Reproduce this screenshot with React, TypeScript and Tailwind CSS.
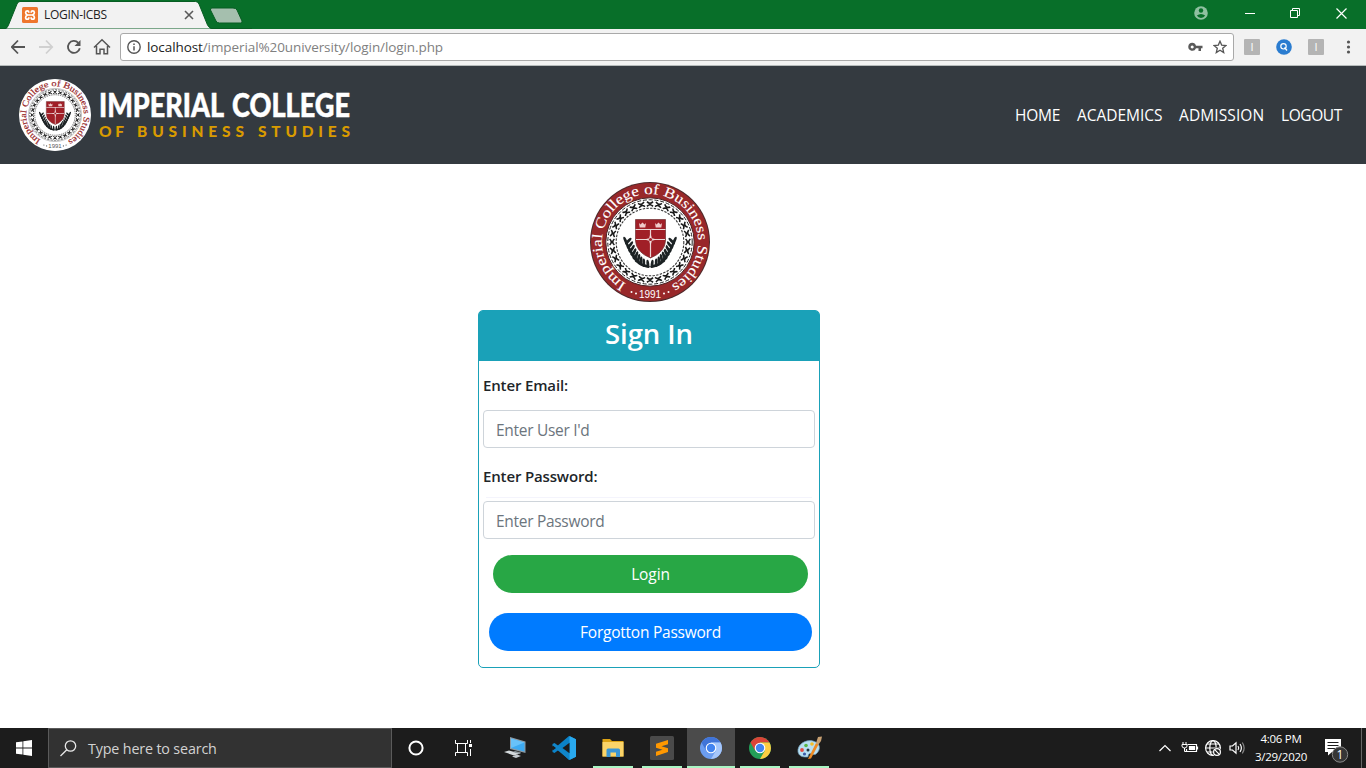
import React from "react";

const ring = (n: number) => Array.from({ length: n }, (_, i) => (i * 360) / n);

function Seal({ id, solid, className }: { id: string; solid: boolean; className: string }) {
  const red = "#98282a";
  return (
    <svg viewBox="0 0 120 120" className={className}>
      <circle cx="60" cy="60" r="60" fill={solid ? "#4d2a2b" : "#fff"} />
      <circle cx="60" cy="60" r="59" fill={solid ? red : "#fff"} />
      <circle cx="60" cy="60" r="44.2" fill="#fff" stroke={solid ? "#4b2224" : "#555"} strokeWidth={solid ? 1 : 0.6} />
      <defs>
        <path id={id} d="M36.2 101.7 A48 48 0 1 1 80.300 103.500" />
      </defs>
      <text fill={solid ? "#fff" : "#98282a"} className="font-['Liberation_Serif',serif] text-[14.5px]" stroke={solid ? "#fff" : "#98282a"} strokeWidth={solid ? 0.1 : 0.3}>
        <textPath href={"#" + id} textLength="254" lengthAdjust="spacingAndGlyphs">Imperial College of Business Studies</textPath>
      </text>
      <text x="60" y="115.8" textAnchor="middle" fill={solid ? "#fff" : "#555"} className="font-['Liberation_Sans',sans-serif] text-[10px]">1991</text>
      {[[41.500, 110], [46, 111.5], [74, 111.5], [78.500, 110]].map(([x, y]) => (
        <circle key={x} cx={x} cy={y} r="1" fill={solid ? "#fff" : "#555"} />
      ))}
      <circle cx="60" cy="60" r="42.2" fill="none" stroke="#222" strokeWidth="1" strokeDasharray="4 1.8" />
      {ring(28).map((a) => (
        <g key={a} transform={`rotate(${a} 60 60) translate(60 22)`} stroke="#1b1b1b" strokeWidth="1.6" fill="none">
          <path d="M-3-2.4Q0 1 3-2.4M-3 2.4Q0-1 3 2.4M-1 0H1" />
        </g>
      ))}
      <circle cx="60" cy="60" r="33.8" fill="none" stroke="#333" strokeWidth="1.1" strokeDasharray="2.4 1.3" />
      <g fill="#1c2224">
        {[0, 1, 2, 3, 4, 5, 6, 7, 8].map((i) => {
          const t = i / 8;
          const x = 57 - 20 * Math.pow(t, 0.75);
          const y = 83 - 24 * Math.pow(t, 1.4);
          const tilt = -62 + 50 * t;
          return (
            <g key={i}>
              <ellipse cx={x - 1.2} cy={y - 1} rx="1.4" ry="4.2" transform={`rotate(${tilt - 12} ${x} ${y})`} />
              <ellipse cx={x + 1} cy={y - 1} rx="1.4" ry="4.2" transform={`rotate(${tilt + 55} ${x} ${y})`} />
              <ellipse cx={121.2 - x} cy={y - 1} rx="1.4" ry="4.2" transform={`rotate(${12 - tilt} ${120 - x} ${y})`} />
              <ellipse cx={119 - x} cy={y - 1} rx="1.4" ry="4.2" transform={`rotate(${-55 - tilt} ${120 - x} ${y})`} />
            </g>
          );
        })}
      </g>
      <path d="M45.5 37.500H75.5V59Q75 70 60.5 76Q46 70 45.5 59Z" fill="#a01f27" stroke="#fff" strokeWidth="3" />
      <path d="M45.5 37.500H75.5V59Q75 70 60.5 76Q46 70 45.5 59Z" fill="#a01f27" stroke="#6b3033" strokeWidth=".7" />
      <path d="M45.5 47.500H75.5M60.5 47V75M46 57.500H75" stroke="#ead6d6" strokeWidth="1.2" />
      <path d="M49 41l1.5 1.5 2-2 2 2 1.5-1.5-.7 4.5h-5.6zM65 41l1.5 1.5 2-2 2 2 1.5-1.5-.7 4.5h-5.6z" fill="#efcaca" />
      <path d="M60.5 51l1.3 5.200 5.200 1.300-5.200 1.300-1.300 5.200-1.300-5.200-5.200-1.300 5.200-1.300z" fill="#f1dede" />
      <circle cx="60.5" cy="57.500" r="1.6" fill="#a01f27" />
    </svg>
  );
}

function TitleBar() {
  return (
    <div className="relative flex h-[29px] w-full bg-[#086f29]">
      <div className="relative flex h-[29px] w-[252px] items-center">
        <svg className="absolute left-0 top-0" width="252" height="29" viewBox="0 0 252 29">
          <path d="M0 28.5H252" stroke="#075d22" />
          <path d="M5 29Q7.500 28 8.500 25L17 4Q18 1.500 20 1.500H195.500Q198 1.500 199 4L207.500 25Q209 28 212 29Z" fill="#f2f2f2" stroke="#075d22" />
          <path d="M212 8H233Q236 8 237 10L242 21Q242.500 23 240.500 23H219.500Q217 23 216 21L210.500 10Q210 8 212 8Z" fill="#a5bfae" stroke="#075d22" />
        </svg>
        <svg className="relative ml-[22px] mt-px" width="16" height="16" viewBox="0 0 16 16">
          <rect width="16" height="16" rx="1.500" fill="#ee762c" />
          <path d="M6.800 5.800V5.200Q6.800 3.800 5.300 3.800T3.600 5.500Q3.600 7.200 5.500 8Q3.600 8.800 3.600 10.500Q3.600 12.200 5.300 12.200T6.800 10.800V10.200M9.200 5.800V5.200Q9.200 3.800 10.700 3.800T12.400 5.500Q12.400 7.200 10.500 8Q12.400 8.800 12.400 10.500Q12.400 12.200 10.700 12.200T9.200 10.800V10.200M5.500 8H10.500" fill="none" stroke="#fff" strokeWidth="1.700" />
        </svg>
        <span className="relative ml-[6px] w-[138px] text-[12px] tracking-[-0.3px] text-[#222]">LOGIN-ICBS</span>
        <svg className="relative ml-[2px] mt-px" width="10" height="10" viewBox="0 0 10 10"><path d="M1 1 9 9M9 1 1 9" stroke="#5a5a5a" strokeWidth="1.600" /></svg>
      </div>
      <div className="ml-auto flex h-[26px] items-center pr-[19px]">
        <svg width="14" height="14" viewBox="0 0 14 14">
          <circle cx="7" cy="7" r="6.800" fill="#8fc0a0" />
          <circle cx="7" cy="4.500" r="2.200" fill="#086f29" />
          <path d="M2.800 9.600Q7 6.400 11.200 9.600Q9.800 11.900 7 11.900T2.800 9.600Z" fill="#086f29" />
        </svg>
        <svg className="ml-[37px]" width="10" height="12"><path d="M0 6.500H10" stroke="#fff" /></svg>
        <svg className="ml-[35px]" width="10" height="10"><path d="M.5 2.500H7.500V9.500H.5ZM2.500 2.500V.5H9.500V7.500H7.500" fill="none" stroke="#fff" /></svg>
        <svg className="ml-[36px]" width="11" height="11"><path d="M.5.500 10.500 10.500M10.500.500.500 10.500" stroke="#fff" strokeWidth="1.200" /></svg>
      </div>
    </div>
  );
}

function Toolbar() {
  return (
    <div className="flex h-[37px] items-center border-b border-[#b6bbbb] bg-[#f2f2f2] pl-[11px] pr-[14px]">
      <svg width="104" height="18" viewBox="0 0 104 18" fill="none" stroke="#555" strokeWidth="1.800">
        <path d="M14 9H1.500M7 2.500.8 9 7 15.500" />
        <path d="M28 9H40.500M35 2.500 41.200 9 35 15.500" stroke="#d0d0d0" />
        <path d="M67.300 4.800A6 6 0 1 0 68.800 10.300" />
        <path d="M69.500 2V8H63.500Z" fill="#555" stroke="none" />
        <path d="M83 9.500 91 1.800 99 9.500M85.500 8V15.700H89V11.200H93V15.700H96.500V8" strokeWidth="1.500" />
      </svg>
      <div className="ml-[5px] flex h-[28px] w-[1114px] items-center rounded-[3px] border border-[#a9a9a9] bg-white pl-[6px] pr-[6px]">
        <svg width="14" height="14" viewBox="0 0 14 14" fill="none" stroke="#555">
          <circle cx="7" cy="7" r="6.200" strokeWidth="1.400" />
          <path d="M7 6.200V10.500M7 3.500V5" strokeWidth="1.500" />
        </svg>
        <span className="ml-[6px] mt-px text-[13.500px] tracking-[-0.09px] text-[#808080]"><span className="text-[#222]">localhost</span>/imperial%20university/login/login.php</span>
        <svg className="ml-auto" width="15" height="10" viewBox="0 0 15 10">
          <path d="M4.200.800A4 4 0 1 0 8 6.300H10.500V9H13V6.300H14.500V3.700H8A4 4 0 0 0 4.200.800ZM4.200 3.500A1.500 1.500 0 1 1 4.190 3.500Z" fill="#5a5a5a" fillRule="evenodd" />
        </svg>
        <svg className="ml-[10px]" width="14" height="14" viewBox="0 0 14 14"><path d="M7 1.200 8.700 5.100 13 5.500 9.700 8.200 10.700 12.500 7 10.200 3.300 12.500 4.300 8.200 1 5.500 5.300 5.100Z" fill="none" stroke="#555" strokeWidth="1.300" /></svg>
      </div>
      <span className="ml-[10px] flex h-4 w-4 items-center justify-center rounded-[1px] bg-[#b4b4b4] text-[11px] text-white">I</span>
      <svg className="ml-4" width="16" height="16" viewBox="0 0 16 16"><circle cx="8" cy="8" r="7.800" fill="#2a7cd0" /><circle cx="7.500" cy="7.300" r="2.700" fill="none" stroke="#fff" strokeWidth="1.200" /><path d="M8.500 8.500 11 11.500" stroke="#fff" strokeWidth="1.300" /></svg>
      <span className="ml-4 flex h-4 w-4 items-center justify-center rounded-[1px] bg-[#b4b4b4] text-[11px] text-white">I</span>
      <svg className="ml-auto" width="7" height="14" fill="#555"><circle cx="3.500" cy="2" r="1.600" /><circle cx="3.500" cy="7" r="1.600" /><circle cx="3.500" cy="12" r="1.600" /></svg>
    </div>
  );
}

function SiteHeader() {
  return (
    <header className="flex h-[98px] items-center bg-[#343a40] pl-[19px] pr-6">
      <Seal id="arc-small" solid={false} className="h-[72px] w-[72px]" />
      <svg className="ml-[8px] overflow-visible" width="256" height="60" viewBox="0 0 256 60">
        <g fill="#fff" stroke="#fff" strokeWidth=".5" className="font-['Lato',sans-serif] text-[32.500px] font-black">
          <text x="0" y="32" textLength="125" lengthAdjust="spacingAndGlyphs">IMPERIAL</text>
          <text x="133" y="32" textLength="118" lengthAdjust="spacingAndGlyphs">COLLEGE</text>
        </g>
        <g fill="#d99b00" className="font-['Lato',sans-serif] text-[15.500px] font-black">
          <text x="0" y="52" textLength="25">OF</text>
          <text x="38" y="52" textLength="107">BUSINESS</text>
          <text x="159" y="52" textLength="92">STUDIES</text>
        </g>
      </svg>
      <nav className="ml-auto mt-[2px] flex gap-4 text-[15.500px] text-white">
        <a className="w-[46px] whitespace-nowrap tracking-[-0.2px]">HOME</a>
        <a className="w-[86px] whitespace-nowrap tracking-[-0.020px]">ACADEMICS</a>
        <a className="w-[86px] whitespace-nowrap tracking-[0.1px]">ADMISSION</a>
        <a className="w-[61px] whitespace-nowrap tracking-[-0.4px]">LOGOUT</a>
      </nav>
    </header>
  );
}

function SignIn() {
  const input = "block h-[38px] w-full rounded-[4px] border border-[#ced4da] bg-white px-3 pt-[2px] text-[15.500px] tracking-[-0.3px] text-[#495057] outline-none placeholder:text-[#6c757d] placeholder:opacity-100";
  return (
    <main className="flex flex-1 flex-col items-center bg-white pr-[68px] pt-[18px]">
      <Seal id="arc-large" solid className="ml-[2px] h-[120px] w-[120px]" />
      <form className="mt-2 h-[358px] w-[342px] rounded-[5px] border border-[#1aa1b8] bg-white" onSubmit={(e) => e.preventDefault()}>
        <h1 className="flex h-[50px] items-center justify-center rounded-t-[3px] bg-[#1aa1b8] pb-[5px] text-[27.500px] font-semibold tracking-[-0.1px] text-white">Sign In</h1>
        <div className="flex flex-col px-1">
          <label className="mt-[12px] h-[24px] text-[15px] font-semibold leading-[24px] tracking-[-0.15px] text-[#212529]">Enter Email:</label>
          <div className="mt-[13px]"><input className={input} placeholder="Enter User I'd" /></div>
          <label className="mt-[16px] h-[24px] text-[15px] font-semibold leading-[24px] tracking-[-0.15px] text-[#212529]">Enter Password:</label>
          <div className="mx-[3px] mt-[9px] h-px bg-[#f4f4fc]" />
          <div className="mt-[3px]"><input className={input} placeholder="Enter Password" /></div>
          <button className="ml-[10px] mt-4 h-[38px] w-[315px] rounded-full bg-[#28a745] pt-[2px] text-[15.500px] tracking-[-0.1px] text-white">Login</button>
          <button className="ml-[6px] mt-5 h-[38px] w-[323px] rounded-full bg-[#007bff] pt-[2px] text-[15.500px] tracking-[-0.24px] text-white">Forgotton Password</button>
        </div>
      </form>
    </main>
  );
}

function TaskItem({ children, open, active }: { children: React.ReactNode; open?: boolean; active?: boolean }) {
  return (
    <div className={active ? "flex h-10 w-12 flex-col items-center bg-[#4b4b4b]" : "flex h-10 w-12 flex-col items-center"}>
      <div className="flex h-[38px] items-center pt-[2px]">{children}</div>
      {open && <div className={active ? "h-[2px] w-12 bg-[#a9f5c3]" : "h-[2px] w-10 bg-[#a9f5c3]"} />}
    </div>
  );
}

function Chrome({ a, b, c }: { a: string; b: string; c: string }) {
  return (
    <svg width="22" height="22" viewBox="0 0 22 22">
      <circle cx="11" cy="11" r="11" fill={b} />
      <path d="M1.500 5.500A11 11 0 0 1 20.500 5.500H11L6.200 13.700Z" fill={a} />
      <path d="M20.500 5.500A11 11 0 0 1 11 22L15.800 13.700L11 5.500Z" fill={c} />
      <circle cx="11" cy="11" r="5.300" fill="#fff" />
      <circle cx="11" cy="11" r="4.200" fill="#4284f0" />
    </svg>
  );
}

function Taskbar() {
  return (
    <footer className="flex h-10 bg-[#1c1c1c] text-white">
      <div className="flex w-12 items-center justify-center">
        <svg width="16" height="16" viewBox="0 0 16 16" fill="#fff"><path d="M0 2.300 6.500 1.400V7.600H0ZM7.300 1.300 16 0V7.600H7.300ZM0 8.400H6.500V14.600L0 13.700ZM7.300 8.400H16V16L7.300 14.800Z" /></svg>
      </div>
      <div className="flex w-[344px] items-center border border-[#5a5a5a] bg-[#323232] pl-[11px]">
        <svg width="17" height="17" viewBox="0 0 17 17" fill="none" stroke="#e8e8e8" strokeWidth="1.300"><circle cx="10.500" cy="6" r="5.200" /><path d="M6.800 9.700.500 16" /></svg>
        <span className="ml-[11px] mt-[2px] text-[14.300px] tracking-[-0.15px] text-[#d2d2d2]">Type here to search</span>
      </div>
      <div className="flex w-12 items-center justify-center"><svg width="16" height="16"><circle cx="8" cy="8" r="6.600" fill="none" stroke="#fff" strokeWidth="2" /></svg></div>
      <div className="flex w-12 items-center justify-center pr-[2px]">
        <svg width="17" height="16" fill="none" stroke="#fff"><path d="M2.500 3.500H10.500V12.500H2.500ZM.5 0V3.500H12.500V0M.5 16V12.500H12.500V16M15.500 0V3M15.500 9V16" /><path d="M14 4H17V7H14Z" fill="#fff" stroke="none" /></svg>
      </div>
      <div className="ml-[3px] flex gap-px">
        <TaskItem>
          <svg width="24" height="24" viewBox="0 0 24 24"><path d="M7 1 22.500 5.500V17L7 13Z" fill="#8d9aa3" /><path d="M8 2.500 21.500 6.400V15.500L8 12Z" fill="#3daaf2" /><path d="M8 2.500 21.500 6.400 8 12Z" fill="#68c2fa" /><path d="M1 16 6 14.500 17 17.500 11 19.500Z" fill="#d4d9dc" /><path d="M9 20.500 14 18.500 18 20 13 22Z" fill="#c5cbd0" /><path d="M12 15 18 16.500 17 18 10 16Z" fill="#90999e" /></svg>
        </TaskItem>
        <TaskItem>
          <svg width="24" height="24" viewBox="0 0 24 24"><path d="M17 0 24 3.200V20.800L17 24 6.500 14 2.500 17 .5 16V14L17 0Z" fill="#0b83c9" /><path d="M.5 8 2.500 7 17.500 18V24L.5 10Z" fill="#1186ca" /><path d="M17.500 0 24 3.200V20.800L17.500 24Z" fill="#29a9ef" /><path d="M17.500 6.800V17.200L10.500 12Z" fill="#1c1c1c" /><path d="M1 9.800 4 12 1 14.200Z" fill="#1c1c1c" /></svg>
        </TaskItem>
        <TaskItem open>
          <svg width="22" height="20" viewBox="0 0 22 20"><path d="M.5 1H8L10 3H21.500V18.500H.500Z" fill="#dda315" /><path d="M.5 4H21.500V18.500H.500Z" fill="#fbd469" /><path d="M4.500 19V12Q4.500 10.500 6 10.500H16.500Q18 10.500 18 12V19H14V14.500H8.500V19Z" fill="#3b96d5" /></svg>
        </TaskItem>
        <TaskItem open>
          <svg width="24" height="24" viewBox="0 0 24 24"><rect width="24" height="24" rx="1.500" fill="#4a4a4a" /><path d="M6 7.800 18 4V8.200L11.500 10.300 18 12.300V16L6 20V15.800L12.500 13.700 6 11.700Z" fill="#ff9800" /></svg>
        </TaskItem>
        <TaskItem open active><Chrome a="#4074d8" b="#6b9df0" c="#a6c7fb" /></TaskItem>
        <TaskItem open><Chrome a="#db4437" b="#239e58" c="#fdcd42" /></TaskItem>
        <TaskItem open>
          <svg width="26" height="25" viewBox="0 0 26 25"><path d="M2 16C1 9 9 3 17 5S25 14 20 18C17 20 15 16 13 18S14 21 10 21 3 20 2 16Z" fill="#b8dff2" stroke="#6a9bb8" strokeWidth=".7" /><circle cx="6" cy="14" r="1.900" fill="#e34a42" /><circle cx="10" cy="9.500" r="1.800" fill="#59b646" /><circle cx="16" cy="8" r="1.800" fill="#f3bd28" /><circle cx="8.500" cy="18" r="1.600" fill="#3b5da8" /><circle cx="12" cy="14" r="1.500" fill="#203540" /><path d="M12 23 20 7 22.500 8.500 15 22.500Z" fill="#ed8b24" /><path d="M20 7 22 1 26 .500 25 5 22.500 8.500Z" fill="#c7a072" /></svg>
        </TaskItem>
      </div>
      <div className="ml-auto flex items-center">
        <svg width="90" height="20" viewBox="0 0 90 20" fill="none" stroke="#fff" strokeWidth="1.200">
          <path d="M1.500 13 7 7.500 12.500 13" />
          <path d="M29.500 6.500H38.500V13.500H28.500V11M39.500 8.500V11.500" /><path d="M31.500 8.500H36.500V11.500H31.500Z" fill="#fff" /><path d="M25 4V6.500M28 4V6.500M24 6.500H29V8Q29 10 26.500 10T24 8ZM26.500 10V13.500H29" strokeWidth="1" />
          <circle cx="55" cy="10" r="7.400" /><ellipse cx="55" cy="10" rx="3.200" ry="7.400" /><path d="M47.500 10H62.500M49 6H61M49 14H61" />
          <circle cx="59" cy="14" r="4.500" fill="#1c1c1c" stroke="none" /><circle cx="59" cy="14" r="3.400" /><path d="M56.700 11.700 61.300 16.300" />
          <path d="M72 8H74.500L78 4.800V15.200L74.500 12H72ZM80 8Q81.500 10 80 12M82 6Q84.800 10 82 14" /><path d="M84.300 4.500Q88 10 84.300 15.500" stroke="#888" />
        </svg>
        <div className="ml-[2px] w-[62px] text-center text-[11.500px] leading-[18px] tracking-[-0.25px]"><div>4:06 PM</div><div>3/29/2020</div></div>
        <svg className="ml-[12px] mt-[5px]" width="26" height="26" viewBox="0 0 26 26"><path d="M1 1H17V14H8L4 17.500V14H1Z" fill="#fff" /><path d="M3.500 4.500H14.500M3.500 7.500H14.500M3.500 10.500H14.500" stroke="#1c1c1c" /><circle cx="16" cy="16.500" r="7.700" fill="#363636" stroke="#888" /><text x="16" y="20.500" textAnchor="middle" fill="#fff" className="text-[12px]">1</text></svg>
        <div className="ml-[11px] mr-[4px] h-10 w-px bg-[#666]" />
      </div>
    </footer>
  );
}

export default function App() {
  return (
    <div className="flex h-[768px] w-[1366px] flex-col overflow-hidden bg-white font-['Open_Sans','Noto_Sans',sans-serif]">
      <TitleBar />
      <Toolbar />
      <SiteHeader />
      <SignIn />
      <Taskbar />
    </div>
  );
}
